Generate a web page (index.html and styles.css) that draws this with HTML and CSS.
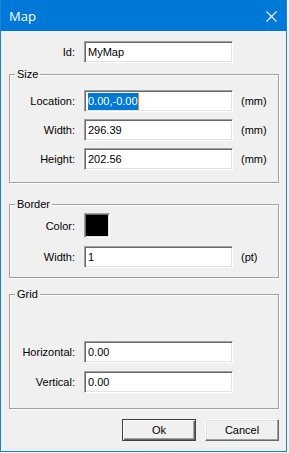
FILE: index.html
```html
<!DOCTYPE html>
<html lang="en">
<head>
    <meta charset="UTF-8">
    <meta name="viewport" content="width=device-width, initial-scale=1.0">
    <title>Map</title>
    <link rel="stylesheet" href="styles.css">
</head>
<body>
    <div class="window">
        <div class="titlebar">
            <span class="title">Map</span>
            <svg class="close" width="11" height="11" viewBox="0 0 11 11">
                <path d="M0.5 0.5 L10.5 10.5 M10.5 0.5 L0.5 10.5" stroke="#fff" stroke-width="1.1" fill="none"/>
            </svg>
        </div>
        <div class="content">
            <div class="row row-id">
                <span class="label">Id:</span>
                <div class="edit">MyMap</div>
            </div>

            <fieldset class="group group-size">
                <legend>Size</legend>
                <div class="row">
                    <span class="label">Location:</span>
                    <div class="edit"><span class="selected">0.00,-0.00</span><span class="caret"></span></div>
                    <span class="unit">(mm)</span>
                </div>
                <div class="row">
                    <span class="label">Width:</span>
                    <div class="edit">296.39</div>
                    <span class="unit">(mm)</span>
                </div>
                <div class="row">
                    <span class="label">Height:</span>
                    <div class="edit">202.56</div>
                    <span class="unit">(mm)</span>
                </div>
            </fieldset>

            <fieldset class="group group-border">
                <legend>Border</legend>
                <div class="row row-color">
                    <span class="label">Color:</span>
                    <div class="swatch"></div>
                </div>
                <div class="row">
                    <span class="label">Width:</span>
                    <div class="edit">1</div>
                    <span class="unit">(pt)</span>
                </div>
            </fieldset>

            <fieldset class="group group-grid">
                <legend>Grid</legend>
                <div class="row">
                    <span class="label">Horizontal:</span>
                    <div class="edit">0.00</div>
                </div>
                <div class="row">
                    <span class="label">Vertical:</span>
                    <div class="edit">0.00</div>
                </div>
            </fieldset>

            <div class="buttons">
                <button class="btn btn-default">Ok</button>
                <button class="btn">Cancel</button>
            </div>
        </div>
    </div>
</body>
</html>
```

FILE: styles.css
```css
body {
    margin: 0;
    padding: 0;
    background-color: #f4f4e8;
    font-family: "Liberation Sans", Arial, sans-serif;
    font-size: 11px;
    color: #000;
    width: 289px;
    height: 453px;
    overflow: hidden;
}
.window {
    width: 287px;
    height: 452px;
    box-sizing: border-box;
    border: 1px solid #1883d7;
    border-top: none;
    background: #f0f0f0;
    display: flex;
    flex-direction: column;
}
.titlebar {
    height: 31px;
    background: #0078d7;
    display: flex;
    align-items: center;
    justify-content: space-between;
    padding: 0 9px 0 8px;
}
.title {
    color: #fff;
    font-family: "Open Sans", "Noto Sans", sans-serif;
    font-size: 13px;
    padding-top: 1px;
}
.close {
    display: block;
    margin-top: 1px;
}
.content {
    padding: 10px 7px 0 8px;
    display: flex;
    flex-direction: column;
}
.row {
    display: flex;
    align-items: center;
    gap: 9px;
    height: 22px;
}
.row-id {
    padding-left: 1px;
}
.label {
    width: 65px;
    text-align: right;
    flex: none;
}
.edit {
    width: 149px;
    height: 22px;
    box-sizing: border-box;
    background: #fff;
    border: 1px solid;
    border-color: #a0a0a0 #fff #fff #a0a0a0;
    box-shadow: inset 1px 1px 0 #696969, inset -1px -1px 0 #e3e3e3;
    padding: 0 2px 0 3px;
    display: flex;
    align-items: center;
    flex: none;
}
.selected {
    background: #0078d7;
    color: #fff;
    line-height: 17px;
}
.caret {
    width: 1px;
    height: 17px;
    background: #f08a24;
}
.unit {
    flex: none;
    margin-left: -1px;
}
.swatch {
    width: 26px;
    height: 25px;
    box-sizing: border-box;
    background: #000;
    border: 1px solid;
    border-color: #a0a0a0 #fff #fff #a0a0a0;
    box-shadow: inset 1px 1px 0 #696969, inset -1px -1px 0 #e3e3e3;
}
.row-color {
    height: 25px;
}
.group {
    margin: 0;
    padding: 0;
    min-inline-size: 0;
    border: 1px solid #a0a0a0;
    box-shadow: inset 1px 1px 0 #fff, 1px 1px 0 #fff;
    display: flex;
    flex-direction: column;
}
.group legend {
    font-size: 11px;
    line-height: 13px;
    padding: 0 2px;
    margin-left: 5px;
    background: #f0f0f0;
}
.group-size {
    margin-top: 5px;
    padding: 9px 0 12px;
    gap: 7px;
}
.group-border {
    margin-top: 15px;
    padding: 2px 0 9px;
    gap: 8px;
}
.group-grid {
    margin-top: 10px;
    padding: 40px 0 15px;
    gap: 8px;
}
.buttons {
    display: flex;
    justify-content: flex-end;
    gap: 9px;
    margin-top: 10px;
}
.btn {
    width: 74px;
    height: 22px;
    margin: 0;
    padding: 0;
    font-family: "Liberation Sans", Arial, sans-serif;
    font-size: 11px;
    color: #000;
    background: #f0f0f0;
    border: 1px solid;
    border-color: #fff #696969 #696969 #fff;
    box-shadow: inset -1px -1px 0 #a0a0a0, inset 1px 1px 0 #e3e3e3;
}
.btn-default {
    border-color: #404040;
    box-shadow: inset 1px 1px 0 #fff, inset -1px -1px 0 #696969, inset -2px -2px 0 #a0a0a0;
}
```
